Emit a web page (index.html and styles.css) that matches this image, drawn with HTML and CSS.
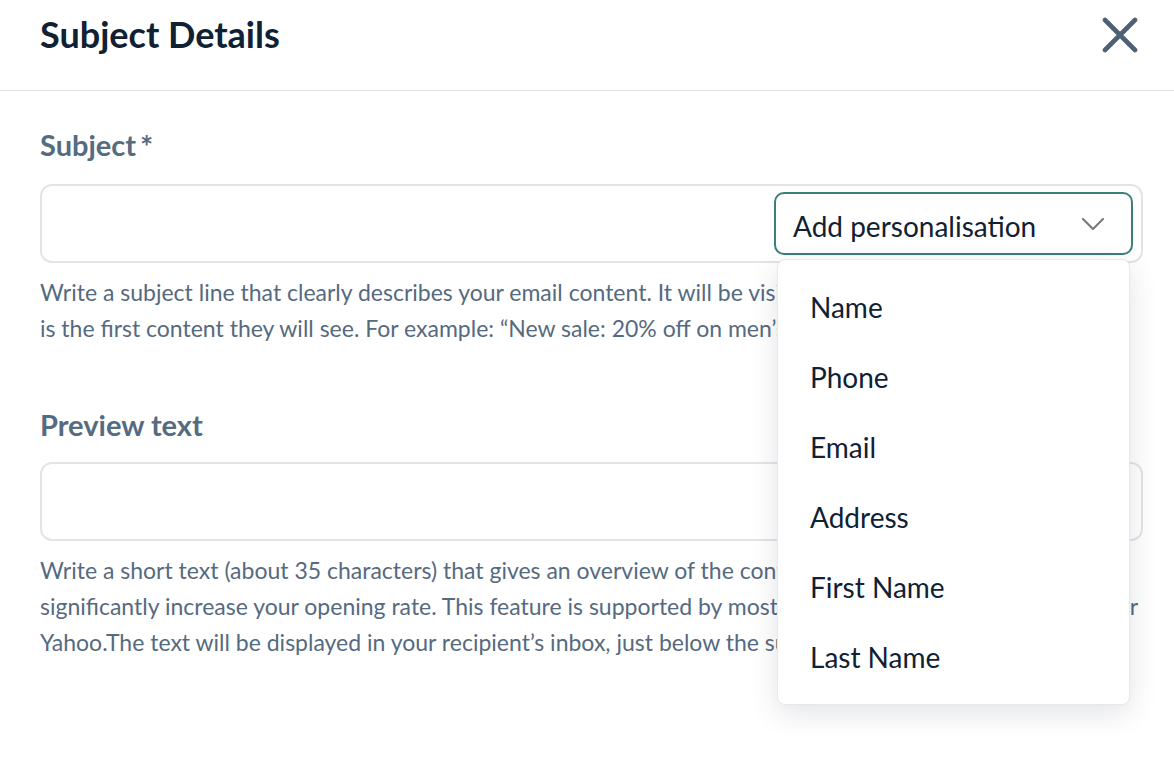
FILE: index.html
```html
<!DOCTYPE html>
<html lang="en">
<head>
<meta charset="utf-8">
<title>Subject Details</title>
<link rel="stylesheet" href="styles.css">
</head>
<body>
<div class="panel">
  <header class="header">
    <h1 class="title">Subject Details</h1>
    <button class="close" aria-label="Close">
      <svg width="36" height="36" viewBox="0 0 36 36"><path d="M3 3 L33 33 M33 3 L3 33" stroke="#4e6174" stroke-width="4.6" stroke-linecap="round" fill="none"/></svg>
    </button>
  </header>
  <main class="body">
    <section class="field field-subject">
      <label class="label">Subject<span class="req">*</span></label>
      <div class="input">
        <div class="select-wrap">
          <div class="select">
            <span class="select-text">Add personalisation</span>
            <svg class="chev" width="24" height="14" viewBox="0 0 24 14"><path d="M2 2 L12 12 L22 2" stroke="#7b7b7b" stroke-width="2.2" fill="none" stroke-linecap="round" stroke-linejoin="round"/></svg>
          </div>
          <ul class="menu">
            <li class="item">Name</li>
            <li class="item">Phone</li>
            <li class="item">Email</li>
            <li class="item">Address</li>
            <li class="item">First Name</li>
            <li class="item">Last Name</li>
          </ul>
        </div>
      </div>
      <p class="help">Write a subject line that clearly describes your email content. It will be visible in your recipients’ inboxes and<br>is the first content they will see. For example: “New sale: 20% off on men’s shoes”.</p>
    </section>
    <section class="field field-preview">
      <label class="label">Preview text</label>
      <div class="input"></div>
      <p class="help">Write a short text (about 35 characters) that gives an overview of the content of your email. This will significantly increase your opening rate. This feature is supported by most email clients, like Gmail, Outlook or Yahoo.The text will be displayed in your recipient’s inbox, just below the subject.</p>
    </section>
  </main>
</div>
</body>
</html>
```

FILE: styles.css
```css
* { box-sizing: border-box; }
html, body { margin: 0; padding: 0; background: #ffffff; }
body { font-family: Lato, "Noto Sans", sans-serif; color: #0f2133; }

.panel { width: 1174px; height: 780px; overflow: hidden; }

.header {
  height: 91px;
  display: flex;
  justify-content: space-between;
  align-items: flex-start;
  padding: 12px 36px 0 40px;
  border-bottom: 1px solid #dfe2e6;
}
.title {
  margin: 0;
  font-size: 36px;
  line-height: 44px;
  font-weight: 700;
  color: #0f2133;
}
.close {
  margin-top: 5px;
  padding: 0;
  border: 0;
  background: none;
  width: 36px;
  height: 36px;
  display: block;
}
.close svg { display: block; }

.body { padding: 0 31px 0 40px; }

.field-subject { margin-top: 37px; }
.field-preview { margin-top: 62px; }

.label {
  display: block;
  font-size: 29px;
  line-height: 34px;
  font-weight: 700;
  color: #556b80;
}
.req {
  font-size: 31px;
  line-height: 31px;
  vertical-align: top;
  margin-left: 4px;
  position: relative;
  top: 3px;
}
.field-subject .input { margin-top: 22px; }
.field-preview .input { margin-top: 20px; }

.input {
  height: 79px;
  border: 2px solid #e1e5e9;
  border-radius: 12px;
  display: flex;
  justify-content: flex-end;
  align-items: center;
  padding: 0 8px;
}

.select-wrap { position: relative; }
.select {
  width: 359px;
  height: 63px;
  border: 2px solid #3b7f79;
  border-radius: 10px;
  display: flex;
  align-items: center;
  justify-content: space-between;
  padding: 4px 26px 0 17px;
  background: #fff;
}
.select-text { font-size: 28px; line-height: 32px; color: #0f2133; }
.chev { display: block; margin-top: -4px; }

.menu {
  position: absolute;
  left: 3px;
  top: 67px;
  width: 353px;
  margin: 0;
  padding: 12px 0 12px;
  list-style: none;
  background: #fff;
  border: 1px solid #e6e8ec;
  border-radius: 8px;
  box-shadow: 0 8px 28px rgba(30, 40, 60, 0.13);
  z-index: 5;
}
.item {
  height: 70px;
  display: flex;
  align-items: center;
  padding-left: 32px;
  font-size: 28px;
  color: #0f2133;
}

.help {
  margin: 11px 0 0;
  font-size: 23px;
  line-height: 36px;
  color: #566a7f;
}
```
